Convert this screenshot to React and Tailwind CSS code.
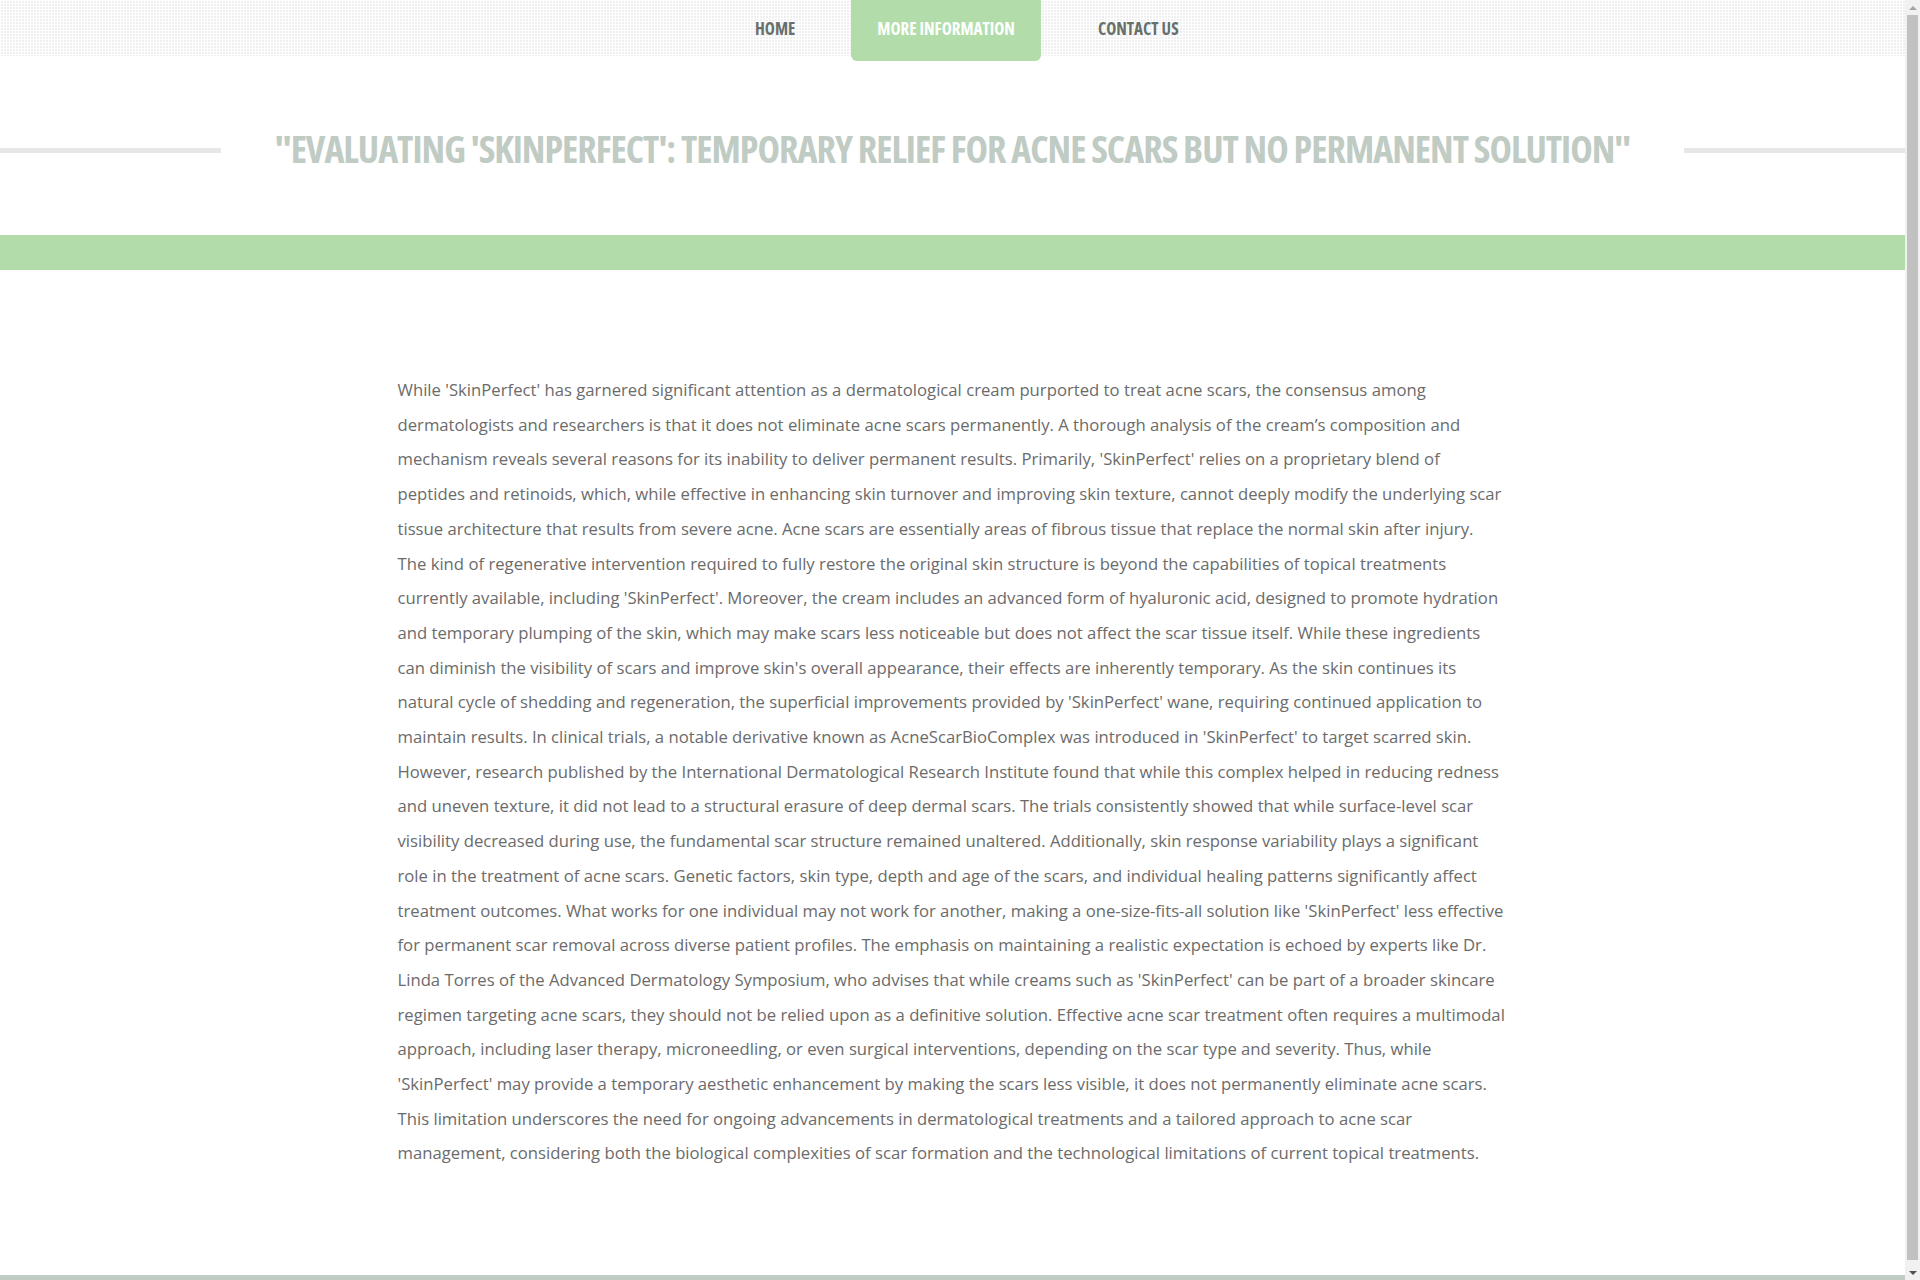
import React from "react";

const lines = [
  "While 'SkinPerfect' has garnered significant attention as a dermatological cream purported to treat acne scars, the consensus among",
  "dermatologists and researchers is that it does not eliminate acne scars permanently. A thorough analysis of the cream’s composition and",
  "mechanism reveals several reasons for its inability to deliver permanent results. Primarily, 'SkinPerfect' relies on a proprietary blend of",
  "peptides and retinoids, which, while effective in enhancing skin turnover and improving skin texture, cannot deeply modify the underlying scar",
  "tissue architecture that results from severe acne. Acne scars are essentially areas of fibrous tissue that replace the normal skin after injury.",
  "The kind of regenerative intervention required to fully restore the original skin structure is beyond the capabilities of topical treatments",
  "currently available, including 'SkinPerfect'. Moreover, the cream includes an advanced form of hyaluronic acid, designed to promote hydration",
  "and temporary plumping of the skin, which may make scars less noticeable but does not affect the scar tissue itself. While these ingredients",
  "can diminish the visibility of scars and improve skin's overall appearance, their effects are inherently temporary. As the skin continues its",
  "natural cycle of shedding and regeneration, the superficial improvements provided by 'SkinPerfect' wane, requiring continued application to",
  "maintain results. In clinical trials, a notable derivative known as AcneScarBioComplex was introduced in 'SkinPerfect' to target scarred skin.",
  "However, research published by the International Dermatological Research Institute found that while this complex helped in reducing redness",
  "and uneven texture, it did not lead to a structural erasure of deep dermal scars. The trials consistently showed that while surface-level scar",
  "visibility decreased during use, the fundamental scar structure remained unaltered. Additionally, skin response variability plays a significant",
  "role in the treatment of acne scars. Genetic factors, skin type, depth and age of the scars, and individual healing patterns significantly affect",
  "treatment outcomes. What works for one individual may not work for another, making a one-size-fits-all solution like 'SkinPerfect' less effective",
  "for permanent scar removal across diverse patient profiles. The emphasis on maintaining a realistic expectation is echoed by experts like Dr.",
  "Linda Torres of the Advanced Dermatology Symposium, who advises that while creams such as 'SkinPerfect' can be part of a broader skincare",
  "regimen targeting acne scars, they should not be relied upon as a definitive solution. Effective acne scar treatment often requires a multimodal",
  "approach, including laser therapy, microneedling, or even surgical interventions, depending on the scar type and severity. Thus, while",
  "'SkinPerfect' may provide a temporary aesthetic enhancement by making the scars less visible, it does not permanently eliminate acne scars.",
  "This limitation underscores the need for ongoing advancements in dermatological treatments and a tailored approach to acne scar",
  "management, considering both the biological complexities of scar formation and the technological limitations of current topical treatments.",
];

export default function App() {
  return (
    <div className="flex h-screen w-full overflow-hidden bg-white font-['Open_Sans',sans-serif]">
      <div className="min-w-0 flex-1 overflow-hidden">
        <header className="h-[56px] w-full bg-white bg-[linear-gradient(90deg,#ffffff_1px,transparent_1px),linear-gradient(#ffffff_1px,#efefef_1px)] bg-[size:3px_3px]">
          <nav className="flex h-full items-start pl-[729px]">
            <a className="flex h-[56px] items-center px-[26px] pt-[1px] text-[17px] font-bold uppercase text-[#67706b] font-stretch-condensed">
              Home
            </a>
            <a className="ml-[30px] flex h-[61px] items-center rounded-b-[6px] bg-[#b2ddaa] px-[26px] pb-[4px] text-[17px] font-bold uppercase text-white font-stretch-condensed">
              More Information
            </a>
            <a className="ml-[31px] flex h-[56px] items-center px-[26px] pt-[1px] text-[17px] font-bold uppercase text-[#67706b] font-stretch-condensed">
              Contact Us
            </a>
          </nav>
        </header>

        <div className="flex h-[179px] items-center pt-[10px]">
          <div className="h-[5px] w-[221px] shrink-0 bg-[#e6e8e6]" />
          <h1 className="flex-1 text-center text-[38px] font-bold uppercase leading-none text-[#c0cbc4] font-stretch-condensed tracking-[-1px] -mt-[6px]">
            "Evaluating 'SkinPerfect': Temporary Relief for Acne Scars but No Permanent Solution"
          </h1>
          <div className="h-[5px] w-[221px] shrink-0 bg-[#e6e8e6]" />
        </div>

        <div className="h-[35px] w-full bg-[#b2ddaa]" />

        <main className="mx-auto w-[1140px] px-[15px] pt-[103px] pb-[104px]">
          <p className="text-[16.7px] leading-[34.7px] text-[#6b6b6b]">
            {lines.map((l, i) => (
              <span key={i} className="block whitespace-nowrap">
                {l}
              </span>
            ))}
          </p>
        </main>

        <footer className="h-[10px] w-full bg-[#c0cbc4]" />
      </div>

      <aside className="flex h-full w-[15px] shrink-0 flex-col bg-[#f1f1f1]">
        <div className="flex h-[15px] items-center justify-center">
          <div className="h-0 w-0 border-x-[4px] border-b-[4px] border-x-transparent border-b-[#a3a3a3]" />
        </div>
        <div className="mx-[2px] mb-[5px] flex-1 bg-[#c1c1c1]" />
        <div className="flex h-[15px] items-center justify-center">
          <div className="h-0 w-0 border-x-[4px] border-t-[4px] border-x-transparent border-t-[#505050]" />
        </div>
      </aside>
    </div>
  );
}
